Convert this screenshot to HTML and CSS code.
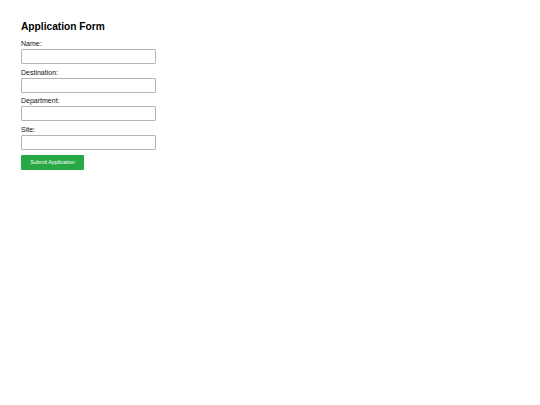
FILE: index.html
```html
<!DOCTYPE html>
<html lang="en">
<head>
<meta charset="utf-8">
<title>Application Form</title>
<link rel="stylesheet" href="styles.css">
</head>
<body>
<div class="page">
  <h2 class="title">Application Form</h2>
  <form class="form">
    <div class="group">
      <label class="label" for="name">Name:</label>
      <input class="field" id="name" type="text">
    </div>
    <div class="group">
      <label class="label" for="destination">Destination:</label>
      <input class="field" id="destination" type="text">
    </div>
    <div class="group">
      <label class="label" for="department">Department:</label>
      <input class="field" id="department" type="text">
    </div>
    <div class="group">
      <label class="label" for="site">Site:</label>
      <input class="field" id="site" type="text">
    </div>
    <button class="submit" type="button">Submit Application</button>
  </form>
</div>
</body>
</html>
```

FILE: styles.css
```css
html, body {
  margin: 0;
  padding: 0;
  background: #ffffff;
}
body {
  font-family: "Liberation Sans", Arial, sans-serif;
  color: #000000;
}
.page {
  padding: 20px 21px;
}
.title {
  margin: 0 0 8px 0;
  padding-top: 0.5px;
  font-size: 10.2px;
  line-height: 11.5px;
  font-weight: bold;
}
.form {
  margin: 0;
}
.group {
  margin-bottom: 4.7px;
}
.label {
  display: block;
  font-size: 7px;
  line-height: 8px;
  margin-bottom: 1px;
  color: #111;
}
.field {
  display: block;
  box-sizing: border-box;
  width: 135px;
  height: 15px;
  margin: 0;
  padding: 0 3px;
  border: 1px solid #b5b5b5;
  border-radius: 1px;
  background: #fff;
  font-size: 7px;
}
.submit {
  display: block;
  box-sizing: border-box;
  width: 63px;
  height: 15px;
  margin-top: 1.8px;
  padding: 0;
  border: none;
  border-radius: 1px;
  background: #28a745;
  color: #ffffff;
  font-family: "Liberation Sans", Arial, sans-serif;
  font-size: 5.4px;
  line-height: 15px;
  text-align: center;
}
```
